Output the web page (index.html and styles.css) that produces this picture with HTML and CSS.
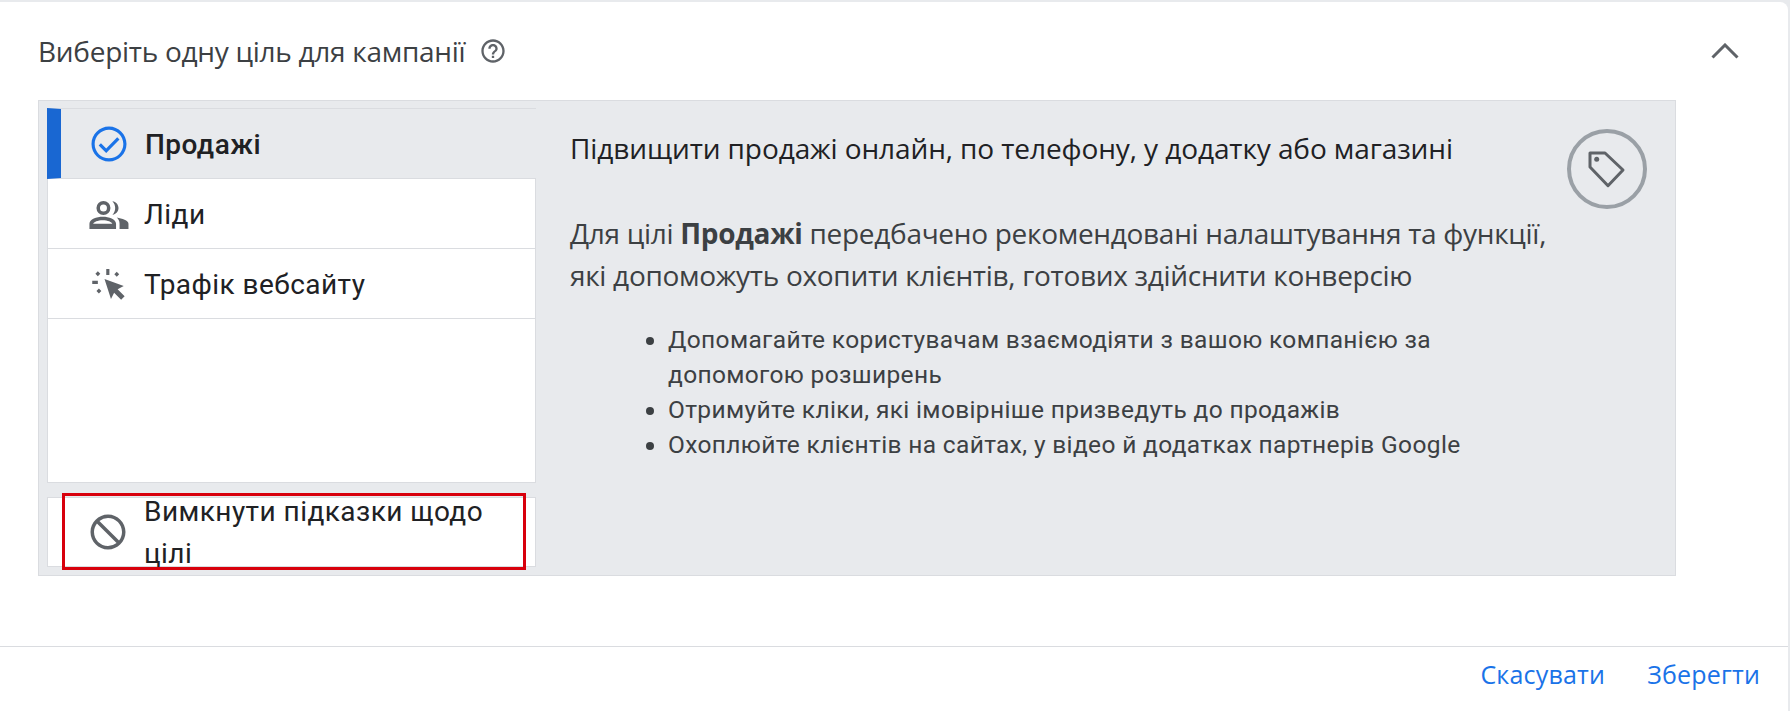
FILE: index.html
```html
<!DOCTYPE html>
<html lang="uk">
<head>
    <meta charset="UTF-8">
    <meta name="viewport" content="width=device-width, initial-scale=1.0">
    <title>Вибір цілі кампанії</title>
    <link rel="stylesheet" href="styles.css">
</head>
<body>
    <div class="card">
        <div class="card-head">
            <div class="head-title">
                <h1>Виберіть одну ціль для кампанії</h1>
                <svg class="help-icon" viewBox="0 0 24 24"><path d="M11 18h2v-2h-2v2zm1-16C6.48 2 2 6.48 2 12s4.48 10 10 10 10-4.48 10-10S17.52 2 12 2zm0 18c-4.41 0-8-3.59-8-8s3.59-8 8-8 8 3.59 8 8-3.59 8-8 8zm0-14c-2.21 0-4 1.79-4 4h2c0-1.1.9-2 2-2s2 .9 2 2c0 2-3 1.75-3 5h2c0-2.25 3-2.5 3-5 0-2.21-1.79-4-4-4z"/></svg>
            </div>
            <svg class="chevron" viewBox="0 0 28 16"><path d="M1.5 14.5 14 2l12.5 12.5"/></svg>
        </div>

        <div class="panel">
            <div class="goals">
                <div class="goal-list">
                    <div class="goal goal-selected">
                        <svg class="goal-icon icon-blue" viewBox="0 0 24 24"><path d="M12 2C6.480 2 2 6.480 2 12s4.480 10 10 10 10-4.480 10-10S17.520 2 12 2zm0 18.200c-4.520 0-8.200-3.680-8.200-8.200S7.480 3.800 12 3.800s8.200 3.680 8.200 8.200-3.680 8.200-8.200 8.200zm4.700-12.100-6.300 6.400-3-3-1.300 1.300 4.300 4.300 7.600-7.700z"/></svg>
                        <span>Продажі</span>
                    </div>
                    <div class="goal">
                        <svg class="goal-icon" viewBox="0 0 24 24"><path d="M9.400 4.600a4 4 0 1 0 0 8 4 4 0 0 0 0-8zm0 2a2 2 0 1 1 0 4 2 2 0 0 1 0-4z"/><path d="M14.500 4.700c2.100.3 3.500 2 3.500 3.900s-1.400 3.600-3.500 3.900c1-1 1.600-2.400 1.600-3.900s-.6-2.900-1.600-3.900z"/><path d="M9 13.500c-3.500 0-7.600 1.500-7.600 4v3.100h15.200v-3.100c0-2.500-4.100-4-7.600-4zm0 2c2.800 0 5.200 1 5.500 2.100H3.500c.3-1.100 2.700-2.100 5.500-2.100z"/><path d="M17 14c3 .6 6.700 1.700 6.700 3.500v3.100h-5.100v-3.100c0-1.500-.6-2.600-1.600-3.500z"/></svg>
                        <span>Ліди</span>
                    </div>
                    <div class="goal">
                        <svg class="goal-icon" viewBox="0 0 24 24"><path d="M10 9.200l11 4-3.500 1.800 4 4-2 2-4-4-1.800 3.500z"/><path d="M11 3.400h1.800v3.500H11zM3 10.200h3.200V12H3zM6.200 4.700l1.400 1.400-1.400 1.400-1.400-1.400zM17 5l1.400 1.400L17 7.800l-1.400-1.400zM6.800 14.600l1.400 1.400-1.400 1.400L5.400 16z"/></svg>
                        <span>Трафік вебсайту</span>
                    </div>
                </div>
                <div class="goal goal-off">
                    <svg class="goal-icon" viewBox="0 0 24 24"><path d="M12 2C6.480 2 2 6.480 2 12s4.480 10 10 10 10-4.480 10-10S17.520 2 12 2zm-8 10c0-1.850.63-3.550 1.690-4.900L16.900 18.310A7.902 7.902 0 0 1 12 20c-4.420 0-8-3.580-8-8zm14.310 4.900L7.100 5.690A7.902 7.902 0 0 1 12 4c4.420 0 8 3.580 8 8 0 1.850-.63 3.550-1.690 4.900z"/></svg>
                    <span>Вимкнути підказки щодо цілі</span>
                </div>
                <div class="red-mark"></div>
            </div>

            <div class="goal-info">
                <h2>Підвищити продажі онлайн, по телефону, у додатку або магазині</h2>
                <p>Для цілі <b>Продажі</b> передбачено рекомендовані налаштування та функції, <br>які допоможуть охопити клієнтів, готових здійснити конверсію</p>
                <ul>
                    <li>Допомагайте користувачам взаємодіяти з вашою компанією за допомогою розширень</li>
                    <li>Отримуйте кліки, які імовірніше призведуть до продажів</li>
                    <li>Охоплюйте клієнтів на сайтах, у відео й додатках партнерів Google</li>
                </ul>
            </div>

            <div class="tag-circle">
                <svg viewBox="0 0 72 72"><path d="M19 20H34L52 37 37 52.700 19 34z"/><circle cx="25.700" cy="26.300" r="2.500"/></svg>
            </div>
        </div>

        <div class="card-foot">
            <a class="foot-btn">Скасувати</a>
            <a class="foot-btn">Зберегти</a>
        </div>
    </div>
</body>
</html>
```

FILE: styles.css
```css
html, body {
    height: 100%;
}

body {
    margin: 0;
    background-color: #e8eaed;
    font-family: Roboto, "Liberation Sans", sans-serif;
    color: #202124;
    overflow: hidden;
}

.card {
    box-sizing: border-box;
    width: 1788px;
    height: 709px;
    margin-top: 2px;
    background-color: #fff;
    border-top-right-radius: 8px;
    display: flex;
    flex-direction: column;
}

.card-head {
    height: 98px;
    padding: 0 36px 0 38px;
    display: flex;
    align-items: center;
    justify-content: space-between;
    flex-shrink: 0;
}

.head-title {
    display: flex;
    align-items: center;
    gap: 14px;
}

h1 {
    margin: 0;
    font-family: "Open Sans", Roboto, sans-serif;
    font-size: 28px;
    font-weight: 400;
    letter-spacing: -0.280px;
    color: #3c4043;
}

.help-icon {
    width: 28px;
    height: 28px;
    fill: #5f6368;
}

.chevron {
    width: 28px;
    height: 16px;
    margin-right: 13px;
    fill: none;
    stroke: #5f6368;
    stroke-width: 3;
}

.panel {
    box-sizing: border-box;
    position: relative;
    width: 1638px;
    height: 476px;
    margin-left: 38px;
    padding: 7px 8px;
    background-color: #e8eaed;
    border: 1px solid #dadce0;
    display: flex;
    flex-shrink: 0;
}

.goals {
    position: relative;
    width: 489px;
    flex-shrink: 0;
    display: flex;
    flex-direction: column;
    gap: 14px;
}

.goal-list {
    box-sizing: border-box;
    height: 375px;
    background-color: #fff;
    border: 1px solid #dadce0;
    border-top: none;
}

.goal {
    box-sizing: border-box;
    height: 70px;
    padding: 0 30px 0 39px;
    display: flex;
    align-items: center;
    gap: 15px;
    font-size: 28px;
    letter-spacing: 0.450px;
    line-height: 42px;
    background-color: #fff;
    border-bottom: 1px solid #dadce0;
}

.goal span {
    margin-top: 2px;
}

.goal-selected {
    height: 71px;
    margin: 0 -1px;
    padding-left: 27px;
    font-weight: 500;
    background-color: #e8eaed;
    border-top: 1px solid #dadce0;
    border-left: 14px solid #1967d2;
    border-bottom: 1px solid #dadce0;
}

.goal-off {
    border: 1px solid #dadce0;
}

.goal-icon {
    width: 42px;
    height: 42px;
    flex-shrink: 0;
    fill: #5f6368;
}

.icon-blue {
    fill: #1a73e8;
}

.red-mark {
    box-sizing: border-box;
    position: absolute;
    left: 15px;
    top: 385px;
    width: 464px;
    height: 77px;
    border: 3px solid #d8000c;
}

.goal-info {
    width: 900px;
    margin-left: 34px;
    padding-top: 19px;
}

h2 {
    margin: 0 0 43px;
    font-family: "Open Sans", Roboto, sans-serif;
    font-size: 28px;
    font-weight: 500;
    letter-spacing: -0.100px;
    line-height: 42px;
}

.goal-info p {
    margin: 0 0 26px;
    font-family: "Open Sans", Roboto, sans-serif;
    font-size: 28px;
    letter-spacing: -0.300px;
    line-height: 42px;
    color: #3c4043;
    white-space: nowrap;
}

.goal-info ul {
    margin: 0;
    padding-left: 98px;
    font-size: 24.500px;
    line-height: 35px;
    color: #3c4043;
    letter-spacing: 0.350px;
}

.tag-circle {
    box-sizing: border-box;
    position: absolute;
    right: 28px;
    top: 28px;
    width: 80px;
    height: 80px;
    border: 4px solid #9aa0a6;
    border-radius: 50%;
}

.tag-circle svg {
    display: block;
    width: 72px;
    height: 72px;
    fill: none;
    stroke: #5f6368;
    stroke-width: 3;
    stroke-linejoin: round;
}

.tag-circle circle {
    fill: #5f6368;
    stroke: none;
}

.card-foot {
    box-sizing: border-box;
    height: 64px;
    margin-top: 70px;
    padding: 0 28px 10px 0;
    border-top: 1px solid #dadce0;
    display: flex;
    align-items: center;
    justify-content: flex-end;
    gap: 42px;
}

.foot-btn {
    font-family: "Open Sans", Roboto, sans-serif;
    font-size: 25px;
    font-weight: 500;
    letter-spacing: 0.200px;
    color: #1a73e8;
    cursor: pointer;
}
```
